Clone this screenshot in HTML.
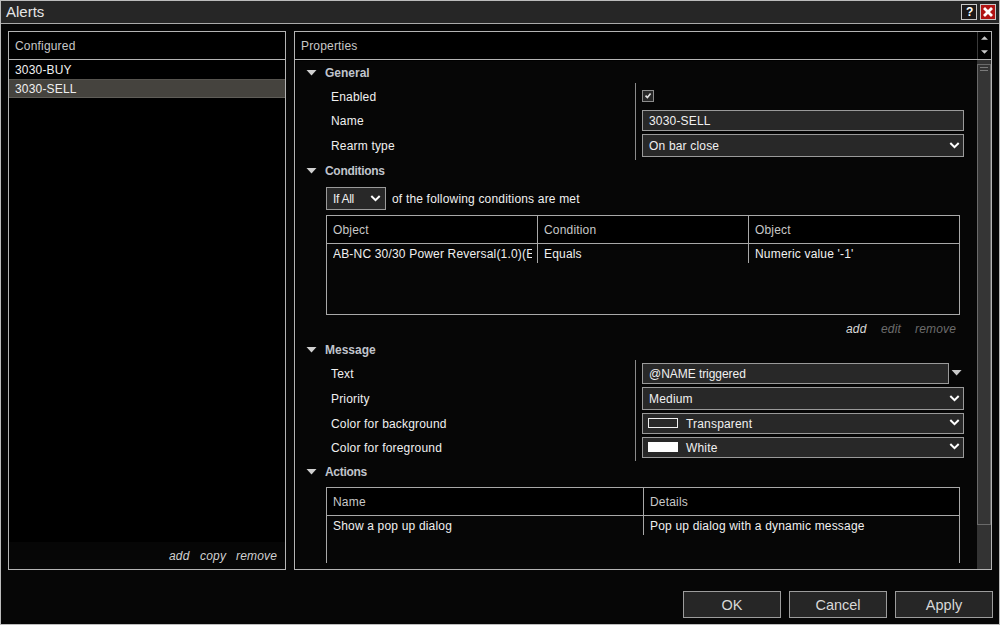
<!DOCTYPE html>
<html><head><meta charset="utf-8">
<style>
*{margin:0;padding:0;box-sizing:border-box}
html,body{width:1000px;height:625px;overflow:hidden;background:#060606}
body{position:relative;font-family:"Liberation Sans",sans-serif;font-size:12px;color:#e6e6e6;letter-spacing:0.18px}
.a{position:absolute}
.t{position:absolute;white-space:pre;line-height:14px}
.win{left:0;top:0;width:1000px;height:625px;border:1px solid #bcbcbc;background:#060606}
.title{left:1px;top:1px;width:998px;height:22px;background:#262626}
.tline{left:1px;top:23px;width:998px;height:1px;background:#aaaaaa}
.panel{border:1px solid #b4b4b4;background:#000}
.hline{height:1px;background:#b4b4b4}
.inp{position:absolute;border:1px solid #9a9a9a;background:#282828}
.btn{position:absolute;border:1px solid #9c9c9c;background:#262626;color:#d8d8d8;font-size:14.5px;text-align:center;line-height:25px;padding-top:1px;letter-spacing:0}
.lbl{color:#f0f0f0}
.sec{font-weight:bold;color:#c0c4cc;letter-spacing:0}
.tri{position:absolute;width:0;height:0;border-left:5px solid transparent;border-right:5px solid transparent;border-top:6px solid #d0d0d0}
.hdr{color:#c8c8c8}
.it{font-style:italic}
</style></head><body>
<div class="a win"></div>
<div class="a title"></div>
<div class="a tline"></div>
<div class="t" style="left:6px;top:4px;font-size:15px;line-height:16px;color:#e4e4e4;letter-spacing:0">Alerts</div>
<!-- help button -->
<div class="a" style="left:961px;top:4px;width:16px;height:16px;border:1px solid #c8c8c8;background:#1c1818"></div>
<div class="t" style="left:966px;top:6px;font-size:12px;font-weight:bold;color:#fff;line-height:13px;letter-spacing:0">?</div>
<!-- close button -->
<div class="a" style="left:980px;top:4px;width:16px;height:16px;border:1px solid #c8c8c8;background:#b01414"></div>
<svg class="a" style="left:980px;top:4px" width="16" height="16" viewBox="0 0 16 16"><path d="M5 5L11 11M11 5L5 11" stroke="#fff" stroke-width="2.8" stroke-linecap="square"/></svg>

<!-- LEFT PANEL -->
<div class="a panel" style="left:8px;top:31px;width:278px;height:539px"></div>
<div class="t hdr" style="left:15px;top:39px">Configured</div>
<div class="a hline" style="left:9px;top:59px;width:276px"></div>
<div class="t lbl" style="left:15px;top:63px">3030-BUY</div>
<div class="a" style="left:9px;top:79px;width:276px;height:19px;background:#45433e;border-top:1px solid #55534e;border-bottom:1px solid #5f5d58"></div>
<div class="t lbl" style="left:15px;top:82px">3030-SELL</div>
<div class="a" style="left:9px;top:542px;width:276px;height:27px;background:#060606"></div>
<div class="t it" style="left:169px;top:549px;color:#d0d0d0">add</div>
<div class="t it" style="left:200px;top:549px;color:#d0d0d0">copy</div>
<div class="t it" style="left:236px;top:549px;color:#d0d0d0">remove</div>

<!-- RIGHT PANEL -->
<div class="a panel" style="left:294px;top:31px;width:698px;height:539px"></div>
<div class="t hdr" style="left:301px;top:39px">Properties</div>
<div class="a hline" style="left:295px;top:59px;width:696px"></div>
<div class="a" style="left:977px;top:32px;width:1px;height:27px;background:#3a3a3a"></div>
<div class="a" style="left:296px;top:61px;width:681px;height:508px;background:#060606"></div>
<!-- scrollbar -->
<div class="a" style="left:977px;top:60px;width:14px;height:509px;background:#333"></div>
<div class="a" style="left:977px;top:64px;width:14px;height:461px;background:#353535;border:1px solid #6a6a6a"></div>

<svg class="a" style="left:977px;top:32px" width="14" height="27" viewBox="0 0 14 27"><path d="M4 7.8H11L7.5 4.3Z" fill="#c8c8c8"/><path d="M4 18.2H11L7.5 21.7Z" fill="#c8c8c8"/></svg>
<div class="a" style="left:980px;top:67px;width:8px;height:1px;background:#7a7a7a"></div>
<div class="a" style="left:980px;top:70px;width:8px;height:1px;background:#7a7a7a"></div>

<!-- General -->
<svg class="a" style="left:306px;top:70px" width="12" height="7" viewBox="0 0 12 7"><path d="M0.5 0H10.5L5.5 5.5Z" fill="#d0d0d0"/></svg>
<div class="t sec" style="left:325px;top:66px">General</div>
<div class="a" style="left:635px;top:83px;width:1px;height:77px;background:#8a8a8a"></div>
<div class="t lbl" style="left:331px;top:90px">Enabled</div>
<div class="t lbl" style="left:331px;top:114px">Name</div>
<div class="t lbl" style="left:331px;top:139px">Rearm type</div>
<div class="a" style="left:642px;top:90px;width:12px;height:12px;border:1px solid #8c8c8c;background:#262626"></div>
<svg class="a" style="left:642px;top:90px" width="12" height="12" viewBox="0 0 12 12"><path d="M3.5 5.6L5.4 7.6L8.6 3.6" stroke="#e0e0e0" stroke-width="1.6" fill="none"/></svg>
<div class="inp" style="left:642px;top:110px;width:322px;height:21px"></div>
<div class="t lbl" style="left:649px;top:114px">3030-SELL</div>
<div class="inp" style="left:642px;top:134px;width:322px;height:23px"></div>
<div class="t lbl" style="left:649px;top:139px">On bar close</div>
<svg class="a chev" style="left:949px;top:141px" width="12" height="9" viewBox="0 0 12 9"><path d="M1.3 2L5.5 6.2L9.7 2" stroke="#fff" stroke-width="2" fill="none"/></svg>

<!-- Conditions -->
<svg class="a" style="left:306px;top:168px" width="12" height="7" viewBox="0 0 12 7"><path d="M0.5 0H10.5L5.5 5.5Z" fill="#d0d0d0"/></svg>
<div class="t sec" style="left:325px;top:164px;letter-spacing:-0.3px">Conditions</div>
<div class="inp" style="left:326px;top:187px;width:60px;height:23px"></div>
<div class="t lbl" style="left:333px;top:192px;letter-spacing:-0.3px">If All</div>
<svg class="a chev" style="left:370px;top:194px" width="12" height="9" viewBox="0 0 12 9"><path d="M1.3 2L5.5 6.2L9.7 2" stroke="#fff" stroke-width="2" fill="none"/></svg>
<div class="t lbl" style="left:392px;top:192px">of the following conditions are met</div>
<div class="a" style="left:326px;top:215px;width:634px;height:100px;border:1px solid #a8a8a8;background:#060606"></div>
<div class="a" style="left:327px;top:216px;width:632px;height:27px;background:#000"></div>
<div class="a hline" style="left:327px;top:243px;width:632px;background:#a8a8a8"></div>
<div class="a" style="left:537px;top:216px;width:1px;height:47px;background:#a8a8a8"></div>
<div class="a" style="left:748px;top:216px;width:1px;height:47px;background:#a8a8a8"></div>
<div class="t hdr" style="left:333px;top:223px">Object</div>
<div class="t hdr" style="left:544px;top:223px">Condition</div>
<div class="t hdr" style="left:755px;top:223px">Object</div>
<div class="t lbl" style="left:333px;top:247px;width:199px;overflow:hidden">AB-NC 30/30 Power Reversal(1.0)(E</div>
<div class="t lbl" style="left:544px;top:247px">Equals</div>
<div class="t lbl" style="left:755px;top:247px">Numeric value '-1'</div>
<div class="t it" style="left:846px;top:322px;color:#d8d8d8">add</div>
<div class="t it" style="left:881px;top:322px;color:#6c6c6c">edit</div>
<div class="t it" style="left:915px;top:322px;color:#6c6c6c">remove</div>

<!-- Message -->
<svg class="a" style="left:306px;top:347px" width="12" height="7" viewBox="0 0 12 7"><path d="M0.5 0H10.5L5.5 5.5Z" fill="#d0d0d0"/></svg>
<div class="t sec" style="left:325px;top:343px">Message</div>
<div class="t lbl" style="left:331px;top:367px">Text</div>
<div class="t lbl" style="left:331px;top:392px">Priority</div>
<div class="t lbl" style="left:331px;top:417px">Color for background</div>
<div class="t lbl" style="left:331px;top:441px">Color for foreground</div>
<div class="a" style="left:635px;top:360px;width:1px;height:101px;background:#8a8a8a"></div>
<div class="inp" style="left:642px;top:363px;width:307px;height:21px"></div>
<div class="t lbl" style="left:649px;top:367px;letter-spacing:-0.05px">@NAME triggered</div>
<svg class="a" style="left:951px;top:370px" width="12" height="7" viewBox="0 0 12 7"><path d="M0.6 0H10.6L5.6 5.6Z" fill="#c8c8c8"/></svg>
<div class="inp" style="left:642px;top:387px;width:322px;height:23px"></div>
<div class="t lbl" style="left:649px;top:392px">Medium</div>
<svg class="a chev" style="left:949px;top:394px" width="12" height="9" viewBox="0 0 12 9"><path d="M1.3 2L5.5 6.2L9.7 2" stroke="#fff" stroke-width="2" fill="none"/></svg>
<div class="inp" style="left:642px;top:413px;width:322px;height:21px"></div>
<div class="a" style="left:648px;top:418px;width:30px;height:10px;border:1px solid #f0f0f0"></div>
<div class="t lbl" style="left:686px;top:417px">Transparent</div>
<svg class="a chev" style="left:949px;top:418px" width="12" height="9" viewBox="0 0 12 9"><path d="M1.3 2L5.5 6.2L9.7 2" stroke="#fff" stroke-width="2" fill="none"/></svg>
<div class="inp" style="left:642px;top:437px;width:322px;height:21px"></div>
<div class="a" style="left:648px;top:442px;width:30px;height:10px;background:#fff"></div>
<div class="t lbl" style="left:686px;top:441px">White</div>
<svg class="a chev" style="left:949px;top:442px" width="12" height="9" viewBox="0 0 12 9"><path d="M1.3 2L5.5 6.2L9.7 2" stroke="#fff" stroke-width="2" fill="none"/></svg>

<!-- Actions -->
<svg class="a" style="left:306px;top:469px" width="12" height="7" viewBox="0 0 12 7"><path d="M0.5 0H10.5L5.5 5.5Z" fill="#d0d0d0"/></svg>
<div class="t sec" style="left:325px;top:465px;letter-spacing:-0.3px">Actions</div>
<div class="a" style="left:326px;top:487px;width:634px;height:76px;border:1px solid #a8a8a8;border-bottom:none;background:#060606"></div>
<div class="a" style="left:327px;top:488px;width:632px;height:27px;background:#000"></div>
<div class="a hline" style="left:327px;top:515px;width:632px;background:#a8a8a8"></div>
<div class="a" style="left:643px;top:488px;width:1px;height:47px;background:#a8a8a8"></div>
<div class="t hdr" style="left:333px;top:495px">Name</div>
<div class="t hdr" style="left:650px;top:495px">Details</div>
<div class="t lbl" style="left:333px;top:519px">Show a pop up dialog</div>
<div class="t lbl" style="left:650px;top:519px">Pop up dialog with a dynamic message</div>

<!-- buttons -->
<div class="btn" style="left:683px;top:591px;width:98px;height:27px">OK</div>
<div class="btn" style="left:789px;top:591px;width:98px;height:27px">Cancel</div>
<div class="btn" style="left:895px;top:591px;width:98px;height:27px">Apply</div>
</body></html>
